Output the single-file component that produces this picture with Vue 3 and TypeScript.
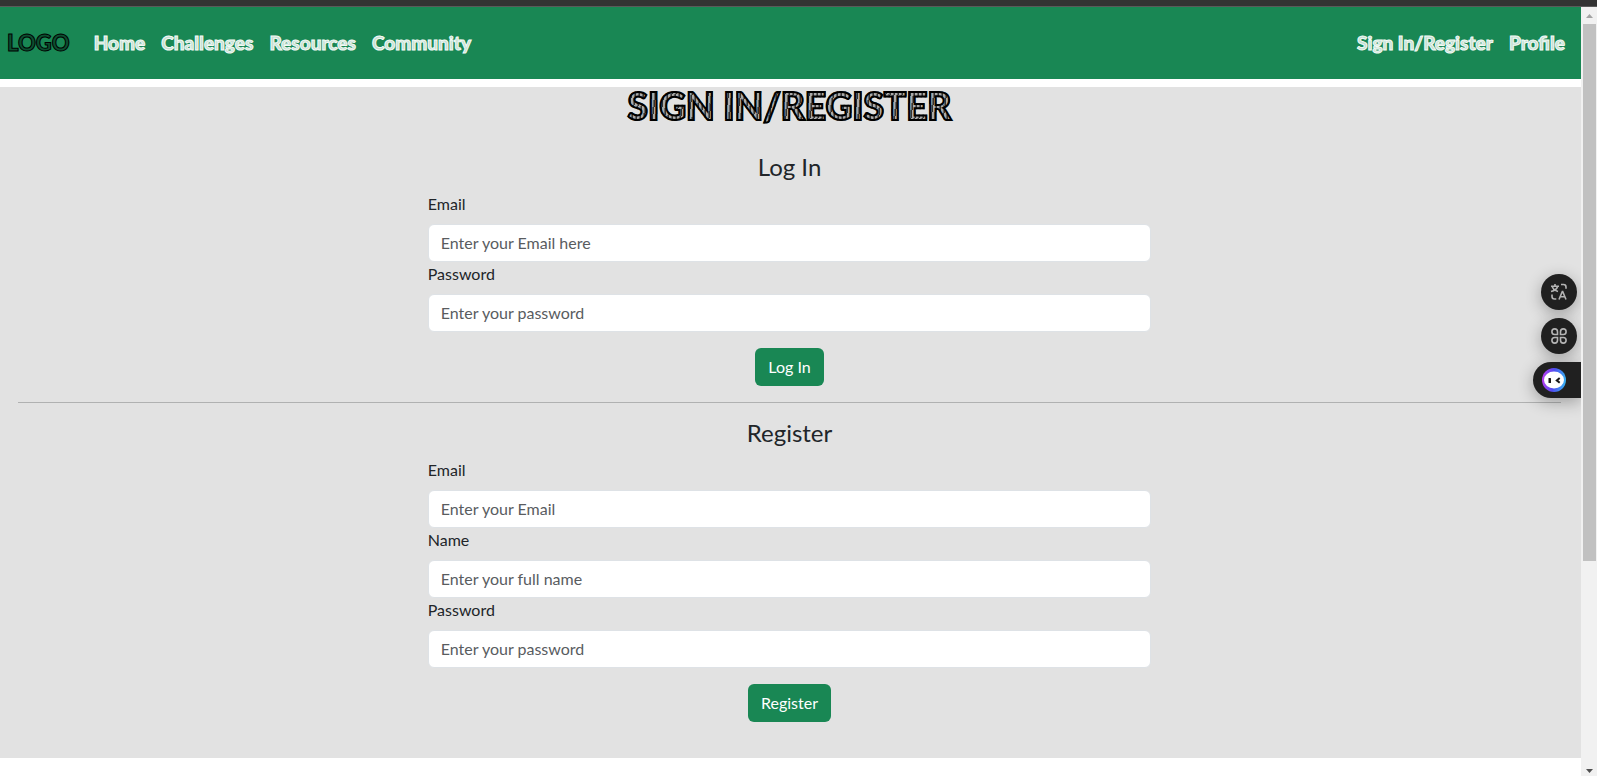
<script setup lang="ts">
interface Field {
  id: string
  label: string
  type: string
  placeholder: string
}
interface FormSection {
  title: string
  fields: Field[]
}

const mainLinks: string[] = ['Home', 'Challenges', 'Resources', 'Community']
const accountLinks: string[] = ['Sign In/Register', 'Profile']

const sections: FormSection[] = [
  {
    title: 'Log In',
    fields: [
      { id: 'login-email', label: 'Email', type: 'email', placeholder: 'Enter your Email here' },
      { id: 'login-password', label: 'Password', type: 'password', placeholder: 'Enter your password' },
    ],
  },
  {
    title: 'Register',
    fields: [
      { id: 'register-email', label: 'Email', type: 'email', placeholder: 'Enter your Email' },
      { id: 'register-name', label: 'Name', type: 'text', placeholder: 'Enter your full name' },
      { id: 'register-password', label: 'Password', type: 'password', placeholder: 'Enter your password' },
    ],
  },
]
</script>

<template>
  <div class="window">
    <div class="window-edge"></div>
    <div class="viewport">
      <div class="page">
        <nav class="navbar">
          <a class="brand" href="#">LOGO</a>
          <div class="links">
            <a v-for="link in mainLinks" :key="link" class="nav-link" href="#">{{ link }}</a>
          </div>
          <div class="links account">
            <a v-for="link in accountLinks" :key="link" class="nav-link" href="#">{{ link }}</a>
          </div>
        </nav>

        <main class="content">
          <h1 class="title">SIGN IN/REGISTER</h1>
          <template v-for="(section, i) in sections" :key="section.title">
            <hr v-if="i > 0" class="divider" />
            <form class="form" @submit.prevent>
              <h2 class="form-title">{{ section.title }}</h2>
              <div v-for="field in section.fields" :key="field.id" class="field">
                <label :for="field.id">{{ field.label }}</label>
                <input :id="field.id" :type="field.type" :placeholder="field.placeholder" />
              </div>
              <button class="submit" type="submit">{{ section.title }}</button>
            </form>
          </template>
        </main>

        <aside class="tools">
          <button class="tool" type="button" aria-label="Translate">
            <svg width="18" height="18" viewBox="0 0 18 18" fill="none" stroke="#b4b4b4" stroke-width="1.6">
              <path d="M1 3.200h8M5 1v2.200M2.200 3.400c.8 2.400 2.600 4 5.800 5M7.600 3.400C6.800 6 4.500 7.600 1 8.500" />
              <path d="M11 1.500h2.500a2.500 2.500 0 0 1 2.500 2.500v1.700M2 11.500v2a2.500 2.500 0 0 0 2.500 2.500h1.800" />
              <path d="M9 16.500l3.300-8h.4l3.300 8M10.200 13.800h4.600" />
            </svg>
          </button>
          <button class="tool" type="button" aria-label="Apps">
            <svg width="18" height="18" viewBox="0 0 18 18" fill="none" stroke="#b4b4b4" stroke-width="1.6">
              <path d="M7.500 7.500H4.700A2.800 2.800 0 1 1 7.500 4.700zM10.500 7.500h2.800a2.800 2.800 0 1 0-2.800-2.800zM7.500 10.500H4.700a2.800 2.800 0 1 0 2.800 2.800zM10.500 10.500h2.800a2.800 2.800 0 1 1-2.800 2.800z" />
            </svg>
          </button>
          <button class="tool assistant" type="button" aria-label="Assistant">
            <svg width="24" height="24" viewBox="0 0 24 24">
              <defs>
                <linearGradient id="ring" x1="0" y1="0.7" x2="1" y2="0.8">
                  <stop offset="0" stop-color="#b43cf0" />
                  <stop offset="0.45" stop-color="#4e4df0" />
                  <stop offset="1" stop-color="#35b8f2" />
                </linearGradient>
              </defs>
              <circle cx="12" cy="12" r="12" fill="url(#ring)" />
              <ellipse cx="12" cy="12" rx="10" ry="8.5" fill="#fff" />
              <rect x="6.500" y="10" width="2.500" height="5" rx="0.500" fill="#171717" />
              <path d="M17.700 10l-2.900 2.400 2.900 2.300" fill="none" stroke="#171717" stroke-width="2" />
            </svg>
          </button>
        </aside>
      </div>

      <div class="scrollbar" aria-hidden="true">
        <svg class="arrow" width="16" height="17" viewBox="0 0 16 17"><path d="M5 11h7L8.500 7z" fill="#a3a3a3" /></svg>
        <div class="track"><div class="thumb"></div></div>
        <svg class="arrow" width="16" height="17" viewBox="0 0 16 17"><path d="M5 10h7L8.500 14z" fill="#505050" /></svg>
      </div>
    </div>
  </div>
</template>

<style>
body {
  margin: 0;
  background: #fff;
}
</style>

<style scoped>
* {
  box-sizing: border-box;
}

.window {
  min-height: 100vh;
  display: flex;
  flex-direction: column;
  font-family: Lato, sans-serif;
  font-size: 16px;
  line-height: 24px;
  color: #212529;
}

.window-edge {
  height: 7px;
  background: #333;
  border-bottom: 1px solid #5a5a5a;
}

.viewport {
  flex: 1;
  display: grid;
  grid-template-columns: minmax(0, 1fr) 16px;
}

.page {
  position: relative;
}

.navbar {
  display: flex;
  align-items: center;
  height: 72px;
  padding: 0 8px 0 7px;
  background: #198754;
}

.brand,
.nav-link {
  font-weight: 900;
  text-decoration: none;
  white-space: nowrap;
}

.brand {
  margin-right: 16px;
  font-size: 22px;
  color: #0c4f30;
  -webkit-text-stroke: 1px #000;
}

.links {
  display: flex;
}

.account {
  margin-left: auto;
}

.nav-link {
  padding: 0 8px;
  font-size: 19px;
  color: #c4e0d2;
  -webkit-text-stroke: 1px #f4faf7;
}

.content {
  display: flex;
  flex-direction: column;
  align-items: center;
  margin-top: 8px;
  padding: 0 20px 36px 18px;
  background: #e2e2e2;
}

.title {
  margin: 0 0 28px;
  font-size: 37px;
  line-height: 37px;
  font-weight: 900;
  color: transparent;
  background: repeating-linear-gradient(98deg, #333 0 1px, #aaa 1px 3px, #666 3px 4px);
  background-clip: text;
  -webkit-background-clip: text;
  -webkit-text-stroke: 2px #000;
}

.form {
  display: flex;
  flex-direction: column;
  align-items: center;
  width: calc(50% - 48px);
}

.form-title {
  margin: 0 0 11px;
  font-size: 24px;
  line-height: 29px;
  font-weight: 400;
}

.field {
  width: 100%;
}

.field label {
  display: block;
  width: fit-content;
  margin-bottom: 8px;
}

.field input {
  display: block;
  width: 100%;
  height: 38px;
  padding: 5px 12px 7px;
  font: inherit;
  color: #212529;
  background: #fff;
  border: 1px solid #dee2e6;
  border-radius: 6px;
}

.field input::placeholder {
  color: #595c5f;
  opacity: 1;
}

.submit {
  height: 38px;
  margin-top: 16px;
  padding: 6px 13px;
  font: inherit;
  color: #fff;
  background: #198754;
  border: 0;
  border-radius: 6px;
}

.divider {
  width: 100%;
  height: 1px;
  margin: 16px 0 15px;
  border: 0;
  background: #b0b1b1;
}

/* Floating buttons that hover over the page's right edge */
.tools {
  position: absolute;
  top: 267px;
  right: 0;
  display: flex;
  flex-direction: column;
  align-items: flex-end;
  gap: 8px;
}

.tool {
  display: flex;
  align-items: center;
  justify-content: center;
  width: 36px;
  height: 36px;
  margin-right: 4px;
  padding: 0;
  border: 0;
  border-radius: 18px;
  background: #202020;
  box-shadow: 0 4px 16px rgba(0, 0, 0, 0.3);
}

.assistant {
  justify-content: flex-start;
  width: 48px;
  margin-right: 0;
  padding-left: 9px;
  border-radius: 18px 0 0 18px;
}

.scrollbar {
  display: flex;
  flex-direction: column;
  background: #f1f1f1;
  z-index: 1;
}

.arrow {
  display: block;
}

.track {
  flex: 1;
  padding: 0 1px 0 2px;
}

.thumb {
  height: 73%;
  background: #c1c1c1;
}
</style>
